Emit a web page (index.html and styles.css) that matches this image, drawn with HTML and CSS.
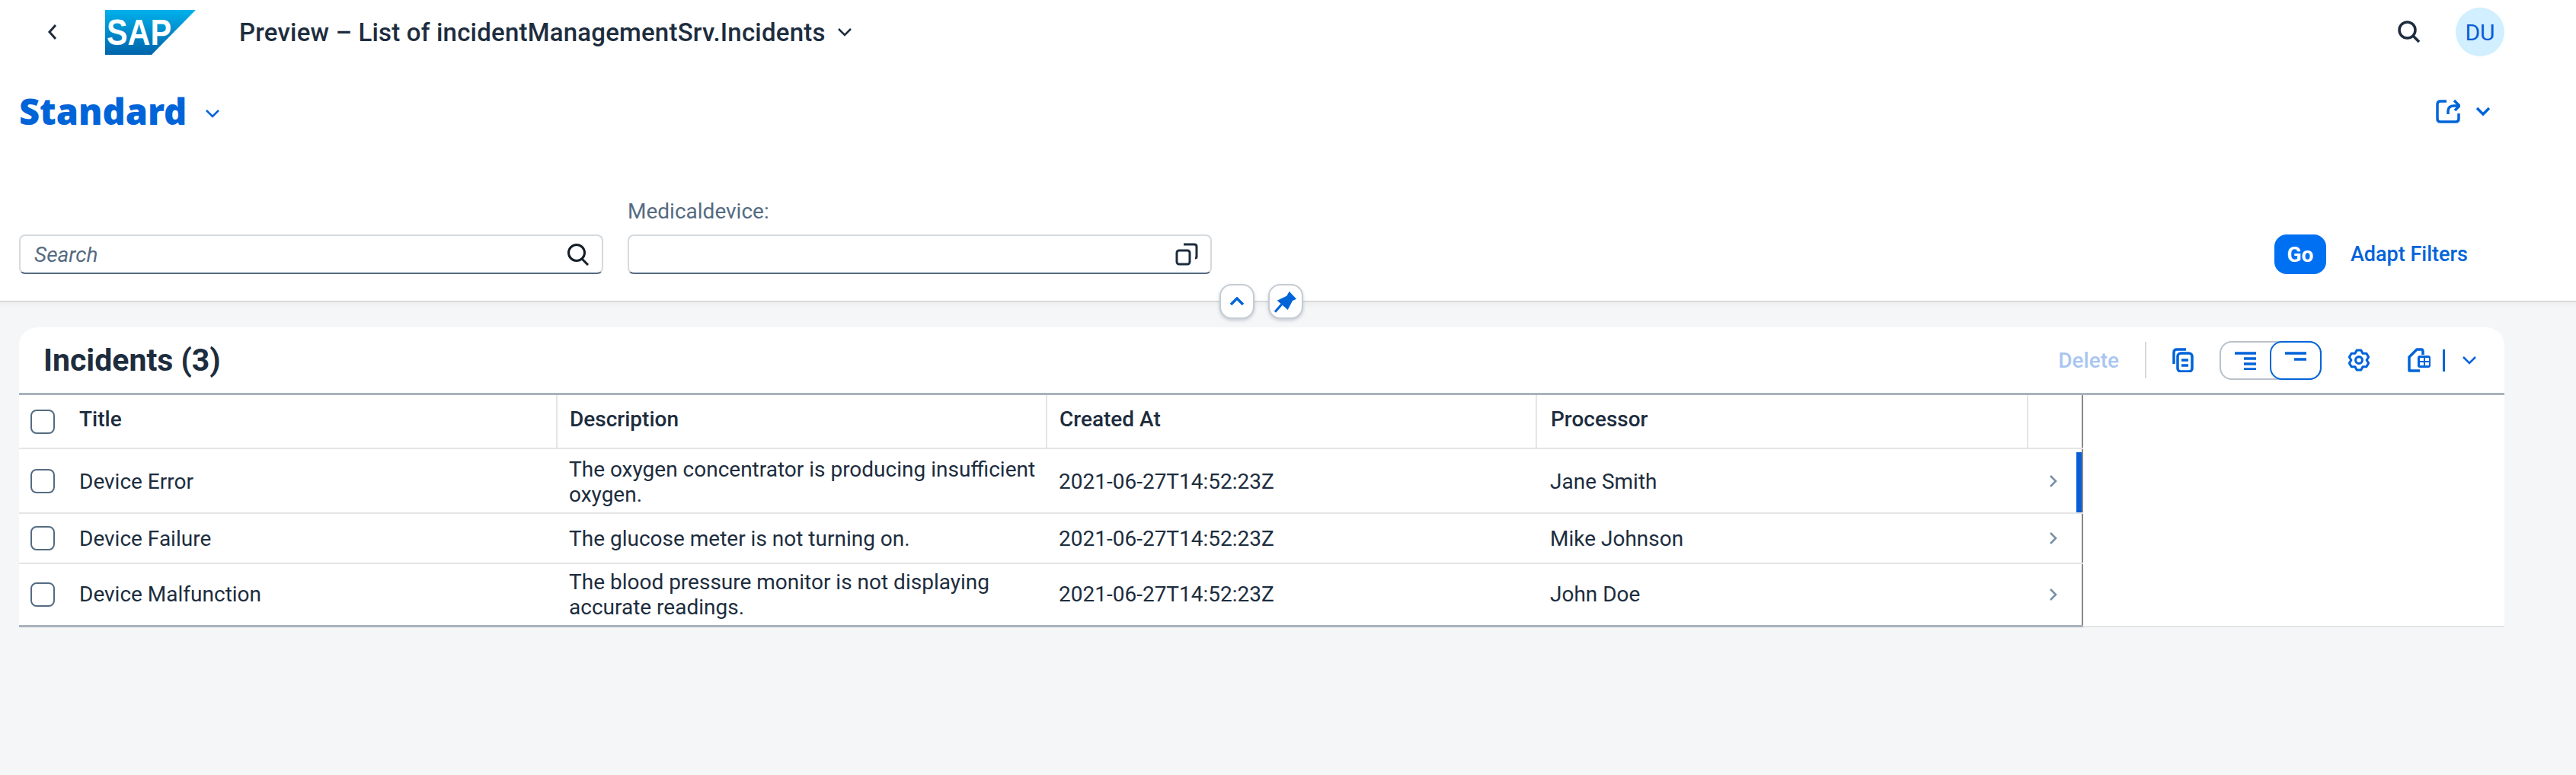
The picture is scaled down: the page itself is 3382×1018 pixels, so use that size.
FILE: index.html
```html
<!DOCTYPE html>
<html lang="en">

<head>
    <meta charset="UTF-8">
    <title>Preview - List of incidentManagementSrv.Incidents</title>
    <link rel="stylesheet" href="styles.css">
</head>

<body>
    <div class="top">
        <div class="shellbar">
            <svg class="back" width="16" height="22" viewBox="0 0 16 22"><path d="M12 2 L4 11 L12 20" /></svg>
            <svg class="logo" width="119" height="59" viewBox="0 0 119 59">
                <defs>
                    <linearGradient id="sapgrad" x1="0" y1="0" x2="0" y2="1">
                        <stop offset="0" stop-color="#00b1eb" />
                        <stop offset="1" stop-color="#0064ab" />
                    </linearGradient>
                </defs>
                <polygon points="0,0 119,0 61,59 0,59" fill="url(#sapgrad)" />
                <text x="2" y="46" textLength="85" lengthAdjust="spacingAndGlyphs" class="logotext">SAP</text>
            </svg>
            <span class="apptitle">Preview – List of incidentManagementSrv.Incidents</span>
            <svg class="chev dark" width="20" height="12" viewBox="0 0 20 12"><path d="M2 2 L10 10 L18 2" /></svg>
            <div class="shellright">
                <svg class="searchicon" width="30" height="30" viewBox="0 0 30 30"><circle cx="12.5" cy="12.5" r="10.5" /><path d="M20 20 L28 28" /></svg>
                <div class="avatar">DU</div>
            </div>
        </div>

        <div class="variantrow">
            <span class="variant">Standard</span>
            <svg class="chev blue variantchev" width="20" height="12" viewBox="0 0 20 12"><path d="M2 2 L10 10 L18 2" /></svg>
            <div class="shareblock">
                <svg class="blueicon" width="32" height="32" viewBox="0 0 32 32">
                    <path d="M14 3 H6 Q2 3 2 7 V26 Q2 30 6 30 H26 Q30 30 30 26 V19" />
                    <path d="M16 20 V16 Q16 9 24 9 H30 M24 2 L31 9 L25 15" />
                </svg>
                <svg class="chev blue thick" width="20" height="14" viewBox="0 0 20 14"><path d="M2 3 L10 11 L18 3" /></svg>
            </div>
        </div>

        <div class="filterbar">
            <div class="field searchfield">
                <div class="inputbox">
                    <span class="placeholder">Search</span>
                    <svg class="fieldicon" width="30" height="30" viewBox="0 0 30 30"><circle cx="13" cy="13" r="10.5" /><path d="M20 21 L28 29" /></svg>
                </div>
            </div>
            <div class="field">
                <label class="fieldlabel">Medicaldevice:</label>
                <div class="inputbox">
                    <svg class="fieldicon navy" width="30" height="30" viewBox="0 0 30 30">
                        <rect x="2" y="10" width="17" height="18" rx="3" />
                        <path d="M11 2 H25 Q28 2 28 5 V18 Q28 20 26 20" />
                    </svg>
                </div>
            </div>
            <div class="filterbtns">
                <button type="button" class="gobtn">Go</button>
                <span class="adapt">Adapt Filters</span>
            </div>
        </div>

        <div class="floatbtns">
            <div class="floatbtn">
                <svg class="chev blue thick" width="20" height="12" viewBox="0 0 20 12"><path d="M2 10 L10 2 L18 10" /></svg>
            </div>
            <div class="floatbtn">
                <svg width="30" height="30" viewBox="0 0 30 30">
                    <path class="pinfill" d="M19.7 1.7 L29 11.7 L24 14 L17.7 26 L3.7 13.7 L16.3 7.7 Z" />
                    <path class="pinleg" d="M9.7 18.7 L1 28.7" />
                </svg>
            </div>
        </div>
    </div>

    <div class="card">
        <div class="cardhead">
            <h2 class="cardtitle">Incidents (3)</h2>
            <div class="tools">
                <span class="delete">Delete</span>
                <span class="toolsep"></span>
                <svg class="blueicon copy" width="28" height="32" viewBox="0 0 28 32">
                    <path d="M2 21 V6 Q2 2 6 2 H18" />
                    <rect x="7" y="7" width="19" height="24" rx="4" />
                    <path d="M12 16 H21 M12 23 H21" />
                </svg>
                <div class="segment">
                    <div class="segitem">
                        <svg class="blueicon" width="28" height="24" viewBox="0 0 28 24"><path d="M0 2 H28 M12 9 H28 M12 16 H28 M12 23 H28" /></svg>
                    </div>
                    <div class="segitem selected">
                        <svg class="blueicon" width="28" height="12" viewBox="0 0 28 12"><path d="M0 2 H28 M12 10 H28" /></svg>
                    </div>
                </div>
                <svg class="blueicon gear" width="30" height="32" viewBox="-2 -1 34 34">
                    <polygon points="11.9,1.3 18.1,1.3 20.75,6 26.15,6 29.3,11.4 26.5,16 29.3,20.6 26.15,26 20.75,26 18.1,30.7 11.9,30.7 9.25,26 3.85,26 0.7,20.6 3.5,16 0.7,11.4 3.85,6 9.25,6" />
                    <circle cx="15" cy="16" r="5" />
                </svg>
                <div class="exportbtn">
                    <svg class="blueicon" width="32" height="32" viewBox="0 0 32 32">
                        <path d="M18 2 H12 L2 12 V30 H16" />
                        <path d="M18 2 Q20 2 20 5 V9" />
                        <rect class="gridbox" x="13" y="10" width="17" height="16" rx="3" />
                        <path class="gridcell" d="M16 13 H21 V17 H16 Z M23 13 H28 V17 H23 Z M16 19 H21 V23 H16 Z M23 19 H28 V23 H23 Z" />
                    </svg>
                    <span class="exportsep"></span>
                    <svg class="chev blue" width="20" height="14" viewBox="0 0 20 14"><path d="M2 3 L10 11 L18 3" /></svg>
                </div>
            </div>
        </div>

        <div class="tablewrap">
            <table class="grid-table">
                <colgroup>
                    <col class="c-sel">
                    <col class="c-title">
                    <col class="c-desc">
                    <col class="c-date">
                    <col class="c-proc">
                    <col class="c-nav">
                </colgroup>
                <thead>
                    <tr>
                        <th class="sel"><span class="check"></span></th>
                        <th class="first">Title</th>
                        <th>Description</th>
                        <th>Created At</th>
                        <th class="proc">Processor</th>
                        <th></th>
                    </tr>
                </thead>
                <tbody>
                    <tr class="row-a">
                        <td class="sel"><span class="check"></span></td>
                        <td>Device Error</td>
                        <td>The oxygen concentrator is producing insufficient oxygen.</td>
                        <td>2021-06-27T14:52:23Z</td>
                        <td class="proc">Jane Smith</td>
                        <td class="nav"><svg class="navchev" width="12" height="16" viewBox="0 0 12 16"><path d="M2 1 L9 8 L2 15" /></svg><span class="highlight"></span></td>
                    </tr>
                    <tr class="row-b">
                        <td class="sel"><span class="check"></span></td>
                        <td>Device Failure</td>
                        <td>The glucose meter is not turning on.</td>
                        <td>2021-06-27T14:52:23Z</td>
                        <td class="proc">Mike Johnson</td>
                        <td class="nav"><svg class="navchev" width="12" height="16" viewBox="0 0 12 16"><path d="M2 1 L9 8 L2 15" /></svg></td>
                    </tr>
                    <tr class="row-c">
                        <td class="sel"><span class="check"></span></td>
                        <td>Device Malfunction</td>
                        <td>The blood pressure monitor is not displaying accurate readings.</td>
                        <td>2021-06-27T14:52:23Z</td>
                        <td class="proc">John Doe</td>
                        <td class="nav"><svg class="navchev" width="12" height="16" viewBox="0 0 12 16"><path d="M2 1 L9 8 L2 15" /></svg></td>
                    </tr>
                </tbody>
            </table>
            <div class="tablerest"></div>
        </div>
    </div>
</body>

</html>
```

FILE: styles.css
```css
* {
    box-sizing: border-box;
}

html,
body {
    margin: 0;
    height: 100%;
    overflow: hidden;
}

body {
    background: #f5f6f7;
    color: #1d2d3e;
    font-family: Roboto, "Noto Sans", sans-serif;
    font-size: 28px;
}

svg {
    display: block;
    flex: none;
    fill: none;
}

/* top white block */
.top {
    position: relative;
    height: 397px;
    background: #fff;
    border-bottom: 2px solid #d9d9d9;
    box-shadow: 0 4px 6px rgba(0, 0, 0, 0.03);
}

.shellbar {
    display: flex;
    align-items: center;
    height: 84px;
    padding: 0 94px 0 61px;
}

.back path {
    stroke: #1d2d3e;
    stroke-width: 3;
}

.logo {
    margin-left: 61px;
}

.logotext {
    fill: #fff;
    font-family: "Liberation Sans", sans-serif;
    font-weight: 700;
    font-size: 48px;
}

.apptitle {
    margin-left: 57px;
    font-weight: 500;
    font-size: 33px;
    letter-spacing: 0.2px;
    white-space: nowrap;
}

.chev path {
    stroke-width: 2.5;
}

.chev.dark {
    margin-left: 15px;
}

.chev.dark path {
    stroke: #1d2d3e;
}

.chev.blue path {
    stroke: #0064d9;
}

.chev.thick path {
    stroke-width: 3.5;
}

.shellright {
    display: flex;
    align-items: center;
    gap: 46px;
    margin-left: auto;
}

.searchicon circle,
.searchicon path {
    stroke: #1d2d3e;
    stroke-width: 3.5;
}

.avatar {
    display: flex;
    align-items: center;
    justify-content: center;
    width: 64px;
    height: 64px;
    border-radius: 50%;
    background: #d1efff;
    color: #0a5dd6;
    font-size: 30px;
}

.variantrow {
    display: flex;
    align-items: center;
    height: 64px;
    margin-top: 30px;
    padding: 0 112px 0 25px;
}

.variant {
    color: #0064d9;
    font-family: "Noto Sans", sans-serif;
    font-size: 47px;
    font-weight: 900;
    line-height: 64px;
}

.variantchev {
    margin: 6px 0 0 24px;
}

.shareblock {
    display: flex;
    align-items: center;
    gap: 20px;
    margin-left: auto;
}

.blueicon path,
.blueicon rect,
.blueicon circle,
.blueicon polygon {
    stroke: #0064d9;
    stroke-width: 3.5;
    stroke-linejoin: round;
}

.blueicon .gridbox {
    fill: #0064d9;
    stroke: none;
}

.blueicon .gridcell {
    fill: #fff;
    stroke: none;
}

/* filters */
.filterbar {
    display: flex;
    align-items: flex-end;
    gap: 32px;
    height: 182px;
    padding: 0 142px 0 25px;
}

.field {
    width: 767px;
}

.fieldlabel {
    display: block;
    margin-bottom: 11px;
    color: #556b82;
    font-size: 28px;
    line-height: 38px;
}

.inputbox {
    display: flex;
    align-items: center;
    justify-content: space-between;
    height: 52px;
    padding: 0 16px 0 18px;
    border: 2px solid #d5dadd;
    border-bottom-color: #556b82;
    border-radius: 8px;
}

.placeholder {
    color: #556b82;
    font-style: italic;
    font-size: 28px;
}

.fieldicon {
    margin-left: auto;
}

.fieldicon circle,
.fieldicon path {
    stroke: #131e29;
    stroke-width: 3;
}

.fieldicon.navy path,
.fieldicon.navy rect {
    stroke: #1d2d3e;
    stroke-width: 3;
}

.filterbtns {
    display: flex;
    align-items: center;
    gap: 32px;
    margin-left: auto;
    height: 52px;
}

.gobtn {
    width: 68px;
    height: 52px;
    padding: 0;
    border: 0;
    border-radius: 16px;
    background: #0070f2;
    color: #fff;
    font-family: inherit;
    font-size: 28px;
    font-weight: 700;
}

.adapt {
    color: #0064d9;
    font-size: 27px;
    font-weight: 500;
}

.floatbtns {
    position: absolute;
    left: 1601px;
    top: 373px;
    display: flex;
    gap: 18px;
}

.floatbtn {
    display: flex;
    align-items: center;
    justify-content: center;
    width: 46px;
    height: 46px;
    background: #fff;
    border: 2px solid #c5ccd3;
    border-radius: 16px;
    box-shadow: 0 2px 4px rgba(85, 107, 130, 0.3);
}

.pinfill {
    fill: #0064d9;
}

.pinleg {
    stroke: #0064d9;
    stroke-width: 3;
}

/* table card */
.card {
    margin: 33px 94px 0 25px;
    background: #fff;
    border-radius: 24px 24px 0 0;
}

.cardhead {
    display: flex;
    align-items: center;
    justify-content: space-between;
    height: 86px;
    padding: 0 36px 0 32px;
}

.cardtitle {
    margin: 0;
    font-size: 41px;
    font-weight: 700;
}

.tools {
    display: flex;
    align-items: center;
}

.delete {
    color: #a9c6f0;
    font-weight: 500;
}

.toolsep {
    width: 2px;
    height: 48px;
    margin: 0 34px;
    background: #d9d9d9;
}

.segment {
    display: flex;
    width: 134px;
    height: 51px;
    margin: 0 34px;
    border: 2px solid #b9c1c9;
    border-radius: 16px;
}

.segitem {
    display: flex;
    align-items: flex-start;
    justify-content: center;
    flex: 1;
    padding-top: 12px;
}

.segitem.selected {
    margin: -2px -2px -2px 0;
    border: 2px solid #0064d9;
    border-radius: 16px;
}

.exportbtn {
    display: flex;
    align-items: center;
    margin-left: 49px;
}

.exportsep {
    width: 3px;
    height: 29px;
    margin: 0 22px 0 14px;
    background: #0064d9;
}

.tablewrap {
    display: flex;
    border-top: 3px solid #a8b3bd;
}

.grid-table {
    width: 2710px;
    height: 303px;
    table-layout: fixed;
    border-collapse: collapse;
    border-right: 2px solid #888;
    border-bottom: 3px solid #a8b3bd;
}

.c-sel {
    width: 63px;
}

.c-title {
    width: 643px;
}

.c-desc {
    width: 643px;
}

.c-date {
    width: 643px;
}

.c-proc {
    width: 645px;
}

.grid-table th,
.grid-table td {
    padding: 0 8px 0 16px;
    text-align: left;
    vertical-align: middle;
    line-height: 33px;
}

.grid-table .proc {
    padding-left: 18px;
}

.grid-table th {
    border-left: 2px solid #e5e5e5;
    border-bottom: 2px solid #e5e5e5;
    font-weight: 500;
    height: 70px;
    padding-bottom: 6px;
}

.grid-table th.sel,
.grid-table th.first {
    border-left: 0;
}

.grid-table td {
    border-bottom: 2px solid #e5e5e5;
}

.grid-table .sel {
    padding: 0 0 0 15px;
}

.row-a {
    height: 85px;
}

.row-a td {
    padding-top: 2px;
}

.row-b {
    height: 66px;
}

.row-c {
    height: 82px;
}

.check {
    display: block;
    width: 32px;
    height: 32px;
    border: 2px solid #556b82;
    border-radius: 8px;
    background: #fff;
}

.grid-table td.nav {
    position: relative;
    padding: 0 0 0 28px;
}

.navchev path {
    stroke: #788fa6;
    stroke-width: 2.5;
}

.highlight {
    position: absolute;
    top: 4px;
    right: 0;
    bottom: 0;
    width: 7px;
    background: #0a5dd6;
}

.tablerest {
    flex: 1;
    border-bottom: 2px solid #e5e5e5;
}
```
